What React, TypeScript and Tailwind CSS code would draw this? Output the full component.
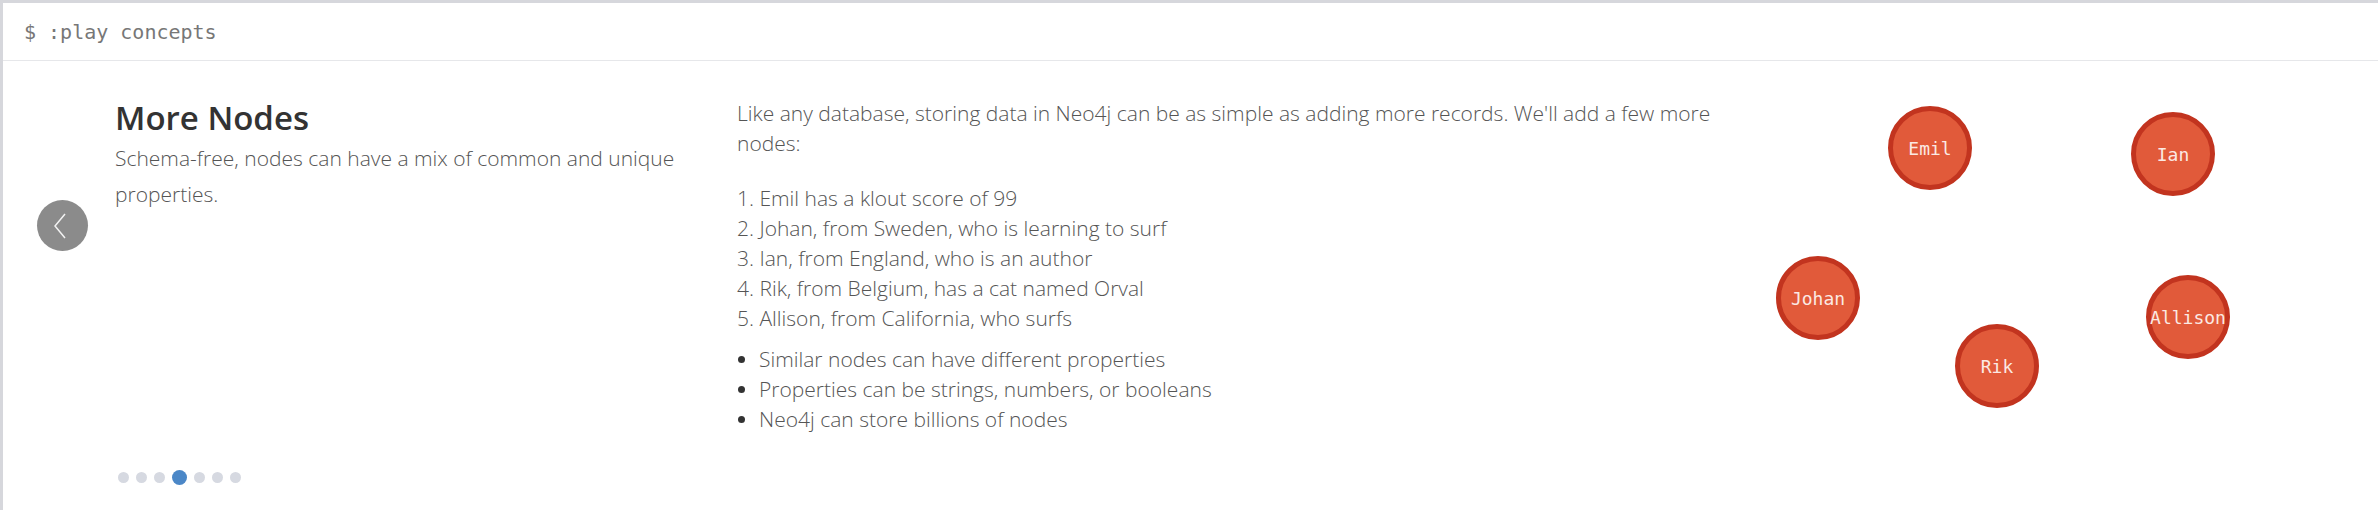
import React from "react";

const people = [
  { name: "Emil", left: 128, top: 45 },
  { name: "Ian", left: 371, top: 51 },
  { name: "Johan", left: 16, top: 195 },
  { name: "Rik", left: 195, top: 263 },
  { name: "Allison", left: 386, top: 214 },
];

const records = [
  "Emil has a klout score of 99",
  "Johan, from Sweden, who is learning to surf",
  "Ian, from England, who is an author",
  "Rik, from Belgium, has a cat named Orval",
  "Allison, from California, who surfs",
];

const notes = [
  "Similar nodes can have different properties",
  "Properties can be strings, numbers, or booleans",
  "Neo4j can store billions of nodes",
];

function GraphNode({ name, left, top }: { name: string; left: number; top: number }) {
  return (
    <div
      className="absolute flex h-[84px] w-[84px] items-center justify-center rounded-full border-[5px] border-[#c2341f] bg-[#e15a3a] text-[18px] text-[#fbe9e3] [font-family:'DejaVu_Sans_Mono',monospace]"
      style={{ left, top }}
    >
      {name}
    </div>
  );
}

export default function App() {
  return (
    <div className="h-[510px] w-full overflow-hidden border-l-[3px] border-t-[3px] border-[#d6d7dc] bg-white">
      {/* Frame header */}
      <div className="flex h-[58px] items-center border-b border-[#e6e7ea] pl-[21px] text-[20px] text-[#777] [font-family:'DejaVu_Sans_Mono',monospace]">
        $ :play concepts
      </div>

      {/* Carousel slide */}
      <div className="flex h-[446px] [font-family:'Open_Sans',sans-serif]">
        {/* Prev arrow */}
        <div className="w-[112px] shrink-0">
          <button className="ml-[34px] mt-[139px] flex h-[51px] w-[51px] items-center justify-center rounded-full bg-[#8b8b8b]">
            <svg width="14" height="26" viewBox="0 0 14 26" className="-ml-[5px]">
              <path d="M12 1 L2 13 L12 25" fill="none" stroke="#f2f2f2" strokeWidth="1.5" />
            </svg>
          </button>
        </div>

        {/* Left text */}
        <div className="flex w-[590px] shrink-0 flex-col pt-[37px]">
          <h2 className="text-[33px] font-semibold leading-[40px] text-[#333]">More Nodes</h2>
          <p className="mt-[2px] text-[21px] font-light leading-[36px] text-[#555]">
            Schema-free, nodes can have a mix of common and unique properties.
          </p>
          <div className="mt-auto mb-[22px] ml-[3px] flex items-center gap-[7px]">
            {[0, 1, 2, 3, 4, 5, 6].map((i) =>
              i === 3 ? (
                <span key={i} className="h-[15px] w-[15px] rounded-full bg-[#4b87c7]" />
              ) : (
                <span key={i} className="h-[11px] w-[11px] rounded-full bg-[#d6d9e1]" />
              )
            )}
          </div>
        </div>

        {/* Middle text */}
        <div className="ml-[32px] w-[1000px] shrink-0 pt-[37px] text-[21px] font-light leading-[30px] text-[#555]">
          <p>
            Like any database, storing data in Neo4j can be as simple as adding more records. We'll add a few more
            nodes:
          </p>
          <ol className="mt-[25px] list-inside list-decimal">
            {records.map((r) => (
              <li key={r}>{r}</li>
            ))}
          </ol>
          <ul className="mt-[11px]">
            {notes.map((n) => (
              <li key={n} className="flex items-center gap-[14px]">
                <span className="ml-[1px] h-[7px] w-[7px] rounded-full bg-[#333]" />
                {n}
              </li>
            ))}
          </ul>
        </div>

        {/* Graph */}
        <div className="relative ml-[23px] flex-1">
          {people.map((p) => (
            <GraphNode key={p.name} {...p} />
          ))}
        </div>
      </div>
    </div>
  );
}
